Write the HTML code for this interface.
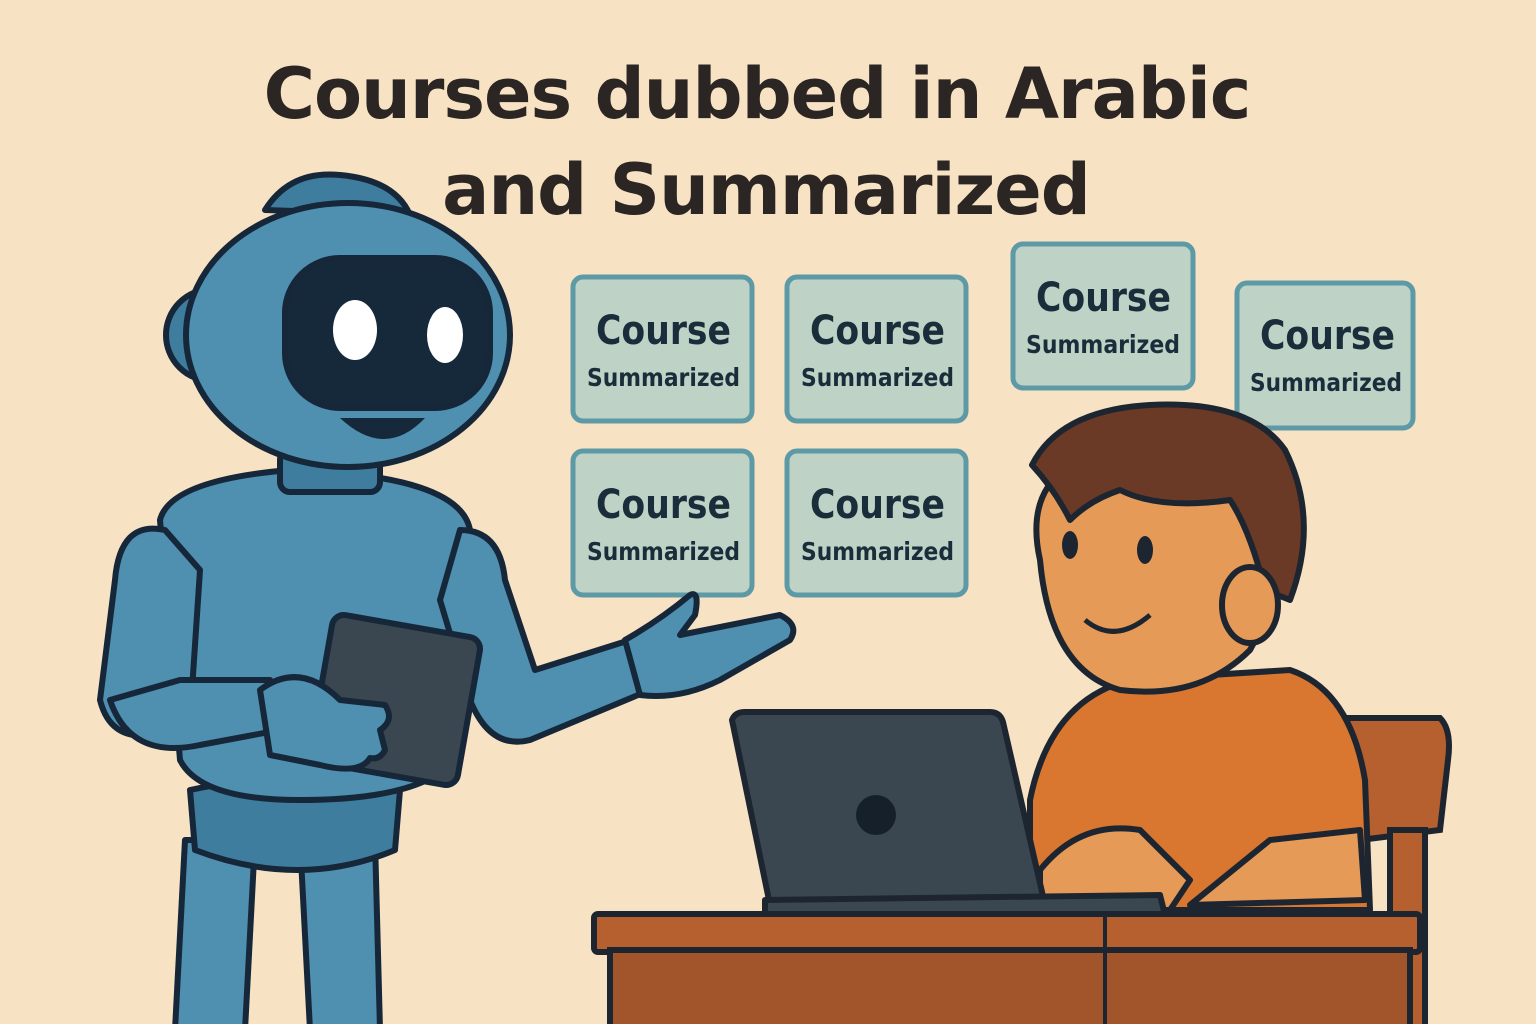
<!DOCTYPE html>
<html><head><meta charset="utf-8"><style>
html,body{margin:0;padding:0;width:1536px;height:1024px;overflow:hidden;background:#f7e3c4}
svg{display:block}
text{font-family:"DejaVu Sans","Liberation Sans",sans-serif;font-weight:bold}
</style></head><body>
<svg width="1536" height="1024" viewBox="0 0 1536 1024">
<rect width="1536" height="1024" fill="#f7e3c4"/>
<text x="757" y="118" font-size="70" fill="#2b2523" text-anchor="middle" letter-spacing="-1">Courses dubbed in Arabic</text>
<text x="766" y="214" font-size="70" fill="#2b2523" text-anchor="middle" letter-spacing="-1">and Summarized</text>

<g stroke="#5e9aa6" stroke-width="5" fill="#bed3c6">
<rect x="573" y="277" width="179" height="144" rx="10"/>
<rect x="787" y="277" width="179" height="144" rx="10"/>
<rect x="1013" y="244" width="180" height="144" rx="10"/>
<rect x="1237" y="283" width="176" height="145" rx="10"/>
<rect x="573" y="451" width="179" height="144" rx="10"/>
<rect x="787" y="451" width="179" height="144" rx="10"/>
</g>
<g fill="#1a2d3a">
<text x="596" y="344" font-size="40" textLength="135" lengthAdjust="spacingAndGlyphs">Course</text><text x="587" y="386" font-size="25" textLength="153" lengthAdjust="spacingAndGlyphs">Summarized</text>
<text x="810" y="344" font-size="40" textLength="135" lengthAdjust="spacingAndGlyphs">Course</text><text x="801" y="386" font-size="25" textLength="153" lengthAdjust="spacingAndGlyphs">Summarized</text>
<text x="1036" y="311" font-size="40" textLength="135" lengthAdjust="spacingAndGlyphs">Course</text><text x="1026" y="353" font-size="25" textLength="154" lengthAdjust="spacingAndGlyphs">Summarized</text>
<text x="1260" y="349" font-size="40" textLength="135" lengthAdjust="spacingAndGlyphs">Course</text><text x="1250" y="391" font-size="25" textLength="152" lengthAdjust="spacingAndGlyphs">Summarized</text>
<text x="596" y="518" font-size="40" textLength="135" lengthAdjust="spacingAndGlyphs">Course</text><text x="587" y="560" font-size="25" textLength="153" lengthAdjust="spacingAndGlyphs">Summarized</text>
<text x="810" y="518" font-size="40" textLength="135" lengthAdjust="spacingAndGlyphs">Course</text><text x="801" y="560" font-size="25" textLength="153" lengthAdjust="spacingAndGlyphs">Summarized</text>
</g>

<!-- Robot -->
<g stroke="#16273a" stroke-width="6" stroke-linejoin="round" fill="#4f8fb0">
<path d="M185 840 L175 1030 L245 1030 L255 840 Z"/>
<path d="M300 840 L310 1030 L380 1030 L375 840 Z"/>
<path d="M190 790 Q280 770 400 790 L395 850 Q300 890 195 850 Z" fill="#3f7d9e"/>
<path d="M160 520 Q170 480 290 470 Q460 475 470 530 L455 760 Q420 800 300 800 Q200 800 180 760 Z"/>
<rect x="280" y="450" width="100" height="42" rx="10" fill="#3f7d9e"/>
<path d="M165 530 Q120 520 115 580 L100 700 Q110 740 150 735 L190 720 L200 570 Z"/>
<path d="M110 700 Q130 760 200 745 L280 730 L270 680 L180 680 Z"/>
<path d="M460 530 Q500 530 505 580 L535 670 L630 640 L650 690 L530 740 Q490 750 470 700 L440 600 Z"/>
<path d="M625 640 Q660 620 690 595 Q700 590 695 615 L680 635 L780 615 Q800 625 790 640 L720 680 Q680 700 640 695 Z"/>
<rect x="320" y="625" width="150" height="150" rx="12" fill="#3a4750" transform="rotate(10 395 700)"/>
<path d="M260 690 Q300 660 340 700 L385 705 Q395 720 380 730 L385 750 Q380 760 370 758 Q360 775 320 765 L270 755 Z"/>
<path d="M265 210 Q290 170 340 175 Q395 180 410 215 Z" fill="#3f7d9e"/>
<circle cx="212" cy="335" r="46" fill="#3f7d9e"/>
<ellipse cx="348" cy="335" rx="162" ry="132"/>
<rect x="285" y="258" width="205" height="150" rx="55" fill="#15293a"/>
</g>
<ellipse cx="355" cy="330" rx="22" ry="30" fill="#fff"/>
<ellipse cx="445" cy="335" rx="18" ry="28" fill="#fff"/>
<path d="M340 418 Q385 460 425 418 Z" fill="#15293a"/>

<!-- Chair -->
<g stroke="#1d2630" stroke-width="6" fill="#b5602e">
<path d="M1345 718 L1440 718 Q1452 730 1448 760 L1440 830 L1360 840 Z"/>
<rect x="1390" y="830" width="35" height="200"/>
</g>
<!-- Boy -->
<g stroke="#1d2630" stroke-width="6" stroke-linejoin="round">
<path d="M1030 800 Q1050 700 1130 680 L1290 670 Q1350 690 1365 780 L1370 910 L1030 910 Z" fill="#d9762f"/>
<path d="M1040 560 Q1020 470 1110 450 Q1220 420 1260 480 Q1290 580 1250 650 Q1200 700 1120 690 Q1050 670 1040 560 Z" fill="#e59a57"/>
<path d="M1032 465 Q1060 410 1150 405 Q1250 400 1285 450 Q1320 520 1290 600 L1265 590 Q1250 530 1230 500 Q1160 510 1120 490 Q1090 500 1070 520 Q1055 490 1032 465 Z" fill="#6b3a26"/>
<ellipse cx="1250" cy="605" rx="28" ry="38" fill="#e59a57"/>
<path d="M1040 870 Q1080 820 1140 830 L1190 880 L1170 910 L1040 910 Z" fill="#e59a57"/>
<path d="M1270 840 L1360 830 L1365 900 L1190 905 Z" fill="#e59a57"/>
</g>
<ellipse cx="1070" cy="545" rx="8" ry="14" fill="#1d2630"/>
<ellipse cx="1145" cy="550" rx="8" ry="14" fill="#1d2630"/>
<path d="M1085 620 Q1115 645 1150 615" fill="none" stroke="#1d2630" stroke-width="5"/>
<!-- Laptop -->
<g stroke="#1d2630" stroke-width="6" stroke-linejoin="round">
<path d="M732 720 Q735 712 745 712 L990 712 Q1000 712 1003 722 L1045 905 L770 905 Z" fill="#3a4750"/>
<path d="M765 900 L1160 895 L1165 915 L765 915 Z" fill="#3a4750"/>
</g>
<circle cx="876" cy="815" r="20" fill="#15202a"/>
<!-- Desk -->
<g stroke="#1d2630" stroke-width="6" fill="#b5602e">
<rect x="594" y="914" width="826" height="38" rx="4"/>
<rect x="610" y="950" width="800" height="80" fill="#a2542a"/>
</g>
<line x1="1105" y1="914" x2="1105" y2="1030" stroke="#1d2630" stroke-width="4"/>
</svg>
</body></html>
